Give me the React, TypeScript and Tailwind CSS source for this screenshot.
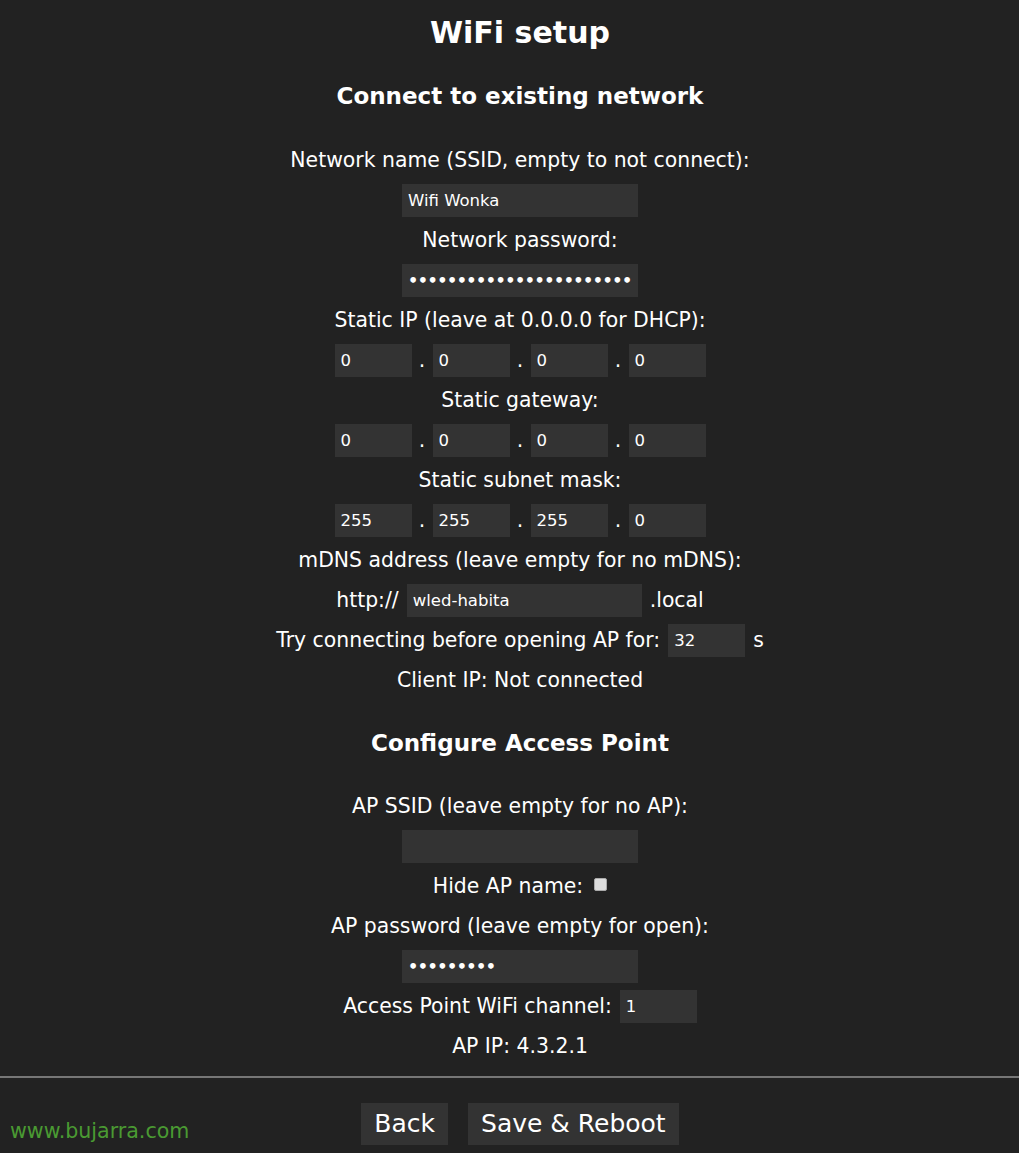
import React from 'react';

const font = "font-['DejaVu_Sans','Verdana',sans-serif]";

const TextField: React.FC<{ value?: string; width?: string; dots?: boolean }> = ({ value = '', width = 'w-[236px]', dots = false }) => (
  <input
    type="text"
    value={value}
    readOnly
    className={`${width} h-[33px] bg-[#333] text-white ${dots ? 'text-[16px] font-bold tracking-[-0.5px]' : 'text-[16.5px]'} px-[6px] outline-none ${font}`}
  />
);

const IpRow: React.FC<{ parts: string[] }> = ({ parts }) => (
  <div className="h-[40px] flex items-center justify-center">
    {parts.map((p, i) => (
      <React.Fragment key={i}>
        {i > 0 && <span className="w-[21px] text-center">.</span>}
        <TextField value={p} width="w-[77px]" />
      </React.Fragment>
    ))}
  </div>
);

const Row: React.FC<{ children: React.ReactNode }> = ({ children }) => (
  <div className="h-[40px] flex items-center justify-center">{children}</div>
);

export default function App() {
  return (
    <div className={`relative min-h-[1153px] bg-[#222] text-white text-[20.4px] pl-[21px] ${font}`}>
      <div className="flex flex-col items-center">
        <h1 className="h-[64px] flex items-center text-[30px] font-bold">WiFi setup</h1>
        <h2 className="h-[64px] flex items-center text-[23px] font-bold">Connect to existing network</h2>

        <div className="mt-[12px] w-full flex flex-col">
          <Row>Network name (SSID, empty to not connect):</Row>
          <Row><TextField value="Wifi Wonka" /></Row>
          <Row>Network password:</Row>
          <Row><TextField value={'•'.repeat(25)} dots /></Row>
          <Row>Static IP (leave at 0.0.0.0 for DHCP):</Row>
          <IpRow parts={['0', '0', '0', '0']} />
          <Row>Static gateway:</Row>
          <IpRow parts={['0', '0', '0', '0']} />
          <Row>Static subnet mask:</Row>
          <IpRow parts={['255', '255', '255', '0']} />
          <Row>mDNS address (leave empty for no mDNS):</Row>
          <Row>
            <span className="mr-[8px]">http://</span>
            <TextField value="wled-habita" width="w-[235px]" />
            <span className="ml-[8px]">.local</span>
          </Row>
          <Row>
            <span className="mr-[8px]">Try connecting before opening AP for:</span>
            <TextField value="32" width="w-[77px]" />
            <span className="ml-[8px]">s</span>
          </Row>
          <Row>Client IP: Not connected</Row>
        </div>

        <h2 className="h-[86px] flex items-center text-[23px] font-bold">Configure Access Point</h2>

        <div className="w-full flex flex-col">
          <Row>AP SSID (leave empty for no AP):</Row>
          <Row><TextField /></Row>
          <Row>
            <span className="mr-[11px]">Hide AP name:</span>
            <span className="w-[13px] h-[13px] -mt-[3px] rounded-[2px] bg-[#ddd] border border-[#aaa]" />
          </Row>
          <Row>AP password (leave empty for open):</Row>
          <Row><TextField value={'•'.repeat(9)} dots /></Row>
          <Row>
            <span className="mr-[8px]">Access Point WiFi channel:</span>
            <TextField value="1" width="w-[77px]" />
          </Row>
          <Row>AP IP: 4.3.2.1</Row>
        </div>
      </div>

      <div className="-ml-[21px] mt-[10px] border-t-2 border-[#777]" />

      <div className="flex justify-center gap-[20px] pt-[25px] pb-[8px]">
        <button className="h-[42px] px-[13px] bg-[#333] text-white text-[25px]">Back</button>
        <button className="h-[42px] px-[13px] bg-[#333] text-white text-[25px]">Save &amp; Reboot</button>
      </div>

      <div className="absolute left-[10px] top-[1116px] text-[20.6px] text-[#4a9a32] font-['DejaVu_Sans',sans-serif]">
        www.bujarra.com
      </div>
    </div>
  );
}
